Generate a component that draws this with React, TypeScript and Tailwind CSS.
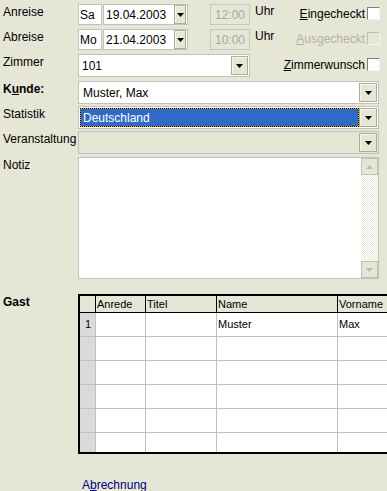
import React from 'react';

const Arrow = ({ color = '#000000', up = false }: { color?: string; up?: boolean }) => (
  <svg width="7" height="4" viewBox="0 0 7 4">
    <path d={up ? 'M0 4h7L3.5 0z' : 'M0 0h7L3.5 4z'} fill={color} />
  </svg>
);

// combo button, beige face with a dark triangle
const DropButton = ({ className }: { className: string }) => (
  <div
    className={`${className} flex items-center justify-center bg-[#e6e6d7] border border-[#aeab96] shadow-[inset_1px_1px_0_#f6f6ee]`}
  >
    <Arrow />
  </div>
);

const Check = ({ disabled }: { disabled?: boolean }) =>
  disabled ? (
    <span className="block w-[13px] h-[13px] border border-t-[#c3c0b0] border-l-[#c3c0b0] border-r-[#f3f3ec] border-b-[#f3f3ec] bg-[#e6e6d7]" />
  ) : (
    <span className="block w-[13px] h-[13px] border border-t-[#7f7f7f] border-l-[#7f7f7f] border-r-[#f2f2f2] border-b-[#f2f2f2] bg-white" />
  );

const Label = ({ children, bold }: { children: React.ReactNode; bold?: boolean }) => (
  <div className={bold ? 'w-[78px] shrink-0 pl-[3px] pt-[1px] font-bold' : 'w-[78px] shrink-0 pl-[3px] pt-[1px]'}>
    {children}
  </div>
);

const cols = ['w-[16px]', 'w-[50px]', 'w-[71px]', 'w-[121px]', 'w-[80px]'];
const headers = ['', 'Anrede', 'Titel', 'Name', 'Vorname'];
const rows = [
  ['1', '', '', 'Muster', 'Max'],
  ['', '', '', '', ''],
  ['', '', '', '', ''],
  ['', '', '', '', ''],
  ['', '', '', '', ''],
  ['', '', '', '', ''],
];

const App: React.FC = () => {
  return (
    <div className="w-[387px] h-[491px] overflow-hidden bg-[#e6e6d7] pt-[4px] font-['Liberation_Sans',Arial,sans-serif] text-[12px] leading-[14px] text-black">
      {/* Anreise */}
      <div className="flex h-[21px]">
        <Label>Anreise</Label>
        <div className="w-[24px] h-full border border-[#c0c0c0] bg-white pl-[1px] flex items-center">Sa</div>
        <div className="ml-[1px] w-[85px] h-full border border-[#c0c0c0] bg-white flex items-center pl-[2px]">
          <span className="flex-1">19.04.2003</span>
          <DropButton className="w-[12px] h-[19px] mr-[1px]" />
        </div>
        <div className="ml-[22px] w-[40px] h-full border border-[#c6c6bc] text-[#a9a9a0] flex items-center justify-center">
          12:00
        </div>
        <div className="ml-[5px]">Uhr</div>
        <div className="ml-auto mr-[7px] mt-[3px] h-[13px] flex items-center gap-[2px]">
          <span>
            <span className="underline">E</span>ingecheckt
          </span>
          <Check />
        </div>
      </div>

      {/* Abreise */}
      <div className="flex h-[21px] mt-[4px]">
        <Label>Abreise</Label>
        <div className="w-[24px] h-full border border-[#c0c0c0] bg-white pl-[1px] flex items-center">Mo</div>
        <div className="ml-[1px] w-[85px] h-full border border-[#c0c0c0] bg-white flex items-center pl-[2px]">
          <span className="flex-1">21.04.2003</span>
          <DropButton className="w-[12px] h-[19px] mr-[1px]" />
        </div>
        <div className="ml-[22px] w-[40px] h-full border border-[#c6c6bc] text-[#a9a9a0] flex items-center justify-center">
          10:00
        </div>
        <div className="ml-[5px]">Uhr</div>
        <div className="ml-auto mr-[7px] mt-[3px] h-[13px] flex items-center gap-[2px] text-[#b3b1a2]">
          <span>
            <span className="underline">A</span>usgecheckt
          </span>
          <Check disabled />
        </div>
      </div>

      {/* Zimmer */}
      <div className="flex h-[23px] mt-[4px]">
        <Label>Zimmer</Label>
        <div className="w-[172px] h-full border border-[#c0c0c0] bg-white p-[1px] flex items-center">
          <span className="flex-1 pl-[2px]">101</span>
          <DropButton className="w-[17px] h-full" />
        </div>
        <div className="ml-auto mr-[7px] mt-[4px] h-[13px] flex items-center gap-[2px]">
          <span>
            <span className="underline">Z</span>immerwunsch
          </span>
          <Check />
        </div>
      </div>

      {/* Kunde */}
      <div className="flex h-[23px] mt-[4px]">
        <Label bold>
          K<span className="underline">u</span>nde:
        </Label>
        <div className="w-[301px] h-full border border-[#c0c0c0] bg-white p-[1px] flex items-center">
          <span className="flex-1 pl-[3px]">Muster, Max</span>
          <DropButton className="w-[18px] h-full" />
        </div>
      </div>

      {/* Statistik */}
      <div className="flex h-[23px] mt-[2px]">
        <Label>Statistik</Label>
        <div className="w-[301px] h-full border border-[#c0c0c0] bg-white p-[1px] flex">
          <div className="flex-1 flex bg-[#e8a53c]">
            <div className="flex-1 flex items-center border border-dotted border-black bg-[#316ac5] bg-clip-padding pl-[2px] text-white">
              Deutschland
            </div>
          </div>
          <DropButton className="w-[18px] h-full" />
        </div>
      </div>

      {/* Veranstaltung */}
      <div className="flex h-[23px] mt-[2px]">
        <Label>Veranstaltung</Label>
        <div className="w-[301px] h-full border border-[#c0c0c0] bg-[#e6e6d7] p-[1px] flex justify-end">
          <DropButton className="w-[18px] h-full" />
        </div>
      </div>

      {/* Notiz */}
      <div className="flex h-[122px] mt-[3px]">
        <Label>Notiz</Label>
        <div className="w-[301px] h-full border border-[#c0c0c0] bg-white flex justify-end">
          <div className="w-[17px] h-full flex flex-col">
            <div className="h-[17px] flex items-center justify-center bg-[#e6e6d7] border border-[#c4c1ae]">
              <Arrow color="#bcbaa8" up />
            </div>
            <div className="flex-1 bg-[repeating-conic-gradient(#ffffff_0%_25%,#ebeadf_0%_50%)] bg-[length:2px_2px]" />
            <div className="h-[17px] flex items-center justify-center bg-[#e6e6d7] border border-[#c4c1ae]">
              <Arrow color="#bcbaa8" />
            </div>
          </div>
        </div>
      </div>

      {/* Gast */}
      <div className="flex h-[160px] mt-[15px]">
        <Label bold>Gast</Label>
        <div className="flex-1 min-w-0 h-full overflow-hidden border-l-2 border-t-2 border-b-2 border-black bg-white text-[11px] leading-[13px]">
          <div className="flex h-[17px] border-b border-black bg-[#e6e6d7] w-max">
            {headers.map((h, i) => (
              <div
                key={i}
                className={`${cols[i]} shrink-0 h-full border-r border-black pl-[1px] flex items-center`}
              >
                {h}
              </div>
            ))}
          </div>
          {rows.map((r, ri) => (
            <div key={ri} className="flex h-[24px] border-b border-[#c0c0c0] w-max">
              {r.map((c, ci) =>
                ci === 0 ? (
                  <div
                    key={ci}
                    className="w-[16px] shrink-0 h-full border-r border-[#c0c0c0] bg-[#dadada] pr-[4px] flex items-center justify-end"
                  >
                    {c}
                  </div>
                ) : (
                  <div
                    key={ci}
                    className={`${cols[ci]} shrink-0 h-full border-r border-[#c0c0c0] pl-[1px] flex items-center`}
                  >
                    {c}
                  </div>
                )
              )}
            </div>
          ))}
        </div>
      </div>

      {/* Abrechnung */}
      <div className="mt-[24px] pl-[82px] text-[#000080]">
        A<span className="underline">b</span>rechnung
      </div>
    </div>
  );
};

export default App;
